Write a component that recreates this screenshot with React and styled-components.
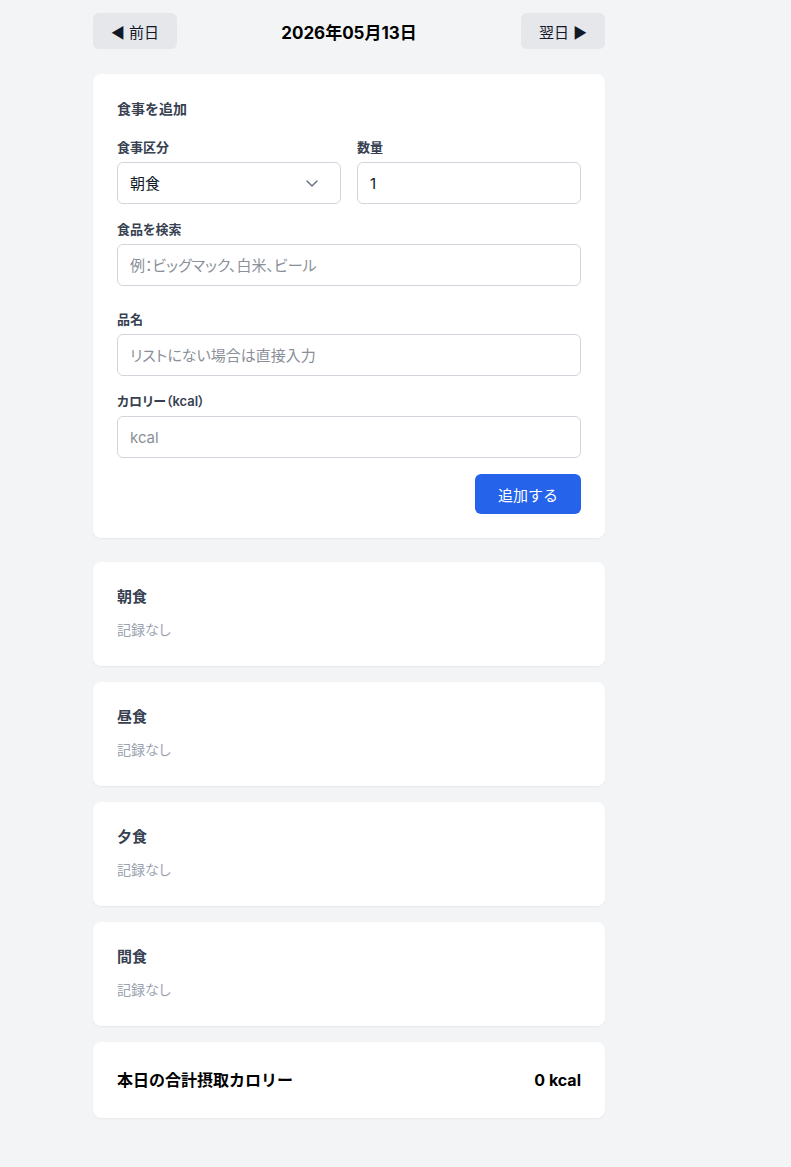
import styled, { createGlobalStyle } from "styled-components";

const GlobalStyle = createGlobalStyle`
  html, body {
    margin: 0;
    padding: 0;
    background: #f3f4f6;
  }
  body {
    font-family: "Inter", "Noto Sans CJK JP", sans-serif;
    color: #111827;
  }
`;

const meals = ["朝食", "昼食", "夕食", "間食"];

const App = () => {
    return (
        <Page>
            <GlobalStyle />
            <Container>
                <DateNav>
                    <NavButton>◀ 前日</NavButton>
                    <DateTitle>2026年05月13日</DateTitle>
                    <NavButton>翌日 ▶</NavButton>
                </DateNav>

                <Card>
                    <FormTitle>食事を追加</FormTitle>
                    <Row>
                        <Field>
                            <Label>食事区分</Label>
                            <SelectWrap>
                                <Select defaultValue="朝食">
                                    {meals.map((m) => <option key={m}>{m}</option>)}
                                </Select>
                                <Chevron viewBox="0 0 16 16">
                                    <path d="M3 6l5 5 5-5" fill="none" stroke="#6b7280" strokeWidth="1.5" strokeLinecap="round" strokeLinejoin="round" />
                                </Chevron>
                            </SelectWrap>
                        </Field>
                        <Field>
                            <Label>数量</Label>
                            <Input type="number" defaultValue="1" />
                        </Field>
                    </Row>
                    <Field $extra>
                        <Label>食品を検索</Label>
                        <Input placeholder="例：ビッグマック、白米、ビール" />
                    </Field>
                    <Field>
                        <Label>品名</Label>
                        <Input placeholder="リストにない場合は直接入力" />
                    </Field>
                    <Field>
                        <Label>カロリー（kcal）</Label>
                        <Input placeholder="kcal" />
                    </Field>
                    <Actions>
                        <AddButton>追加する</AddButton>
                    </Actions>
                </Card>

                {meals.map((m) => (
                    <MealCard key={m}>
                        <MealTitle>{m}</MealTitle>
                        <Empty>記録なし</Empty>
                    </MealCard>
                ))}

                <TotalCard>
                    <span>本日の合計摂取カロリー</span>
                    <span>0 kcal</span>
                </TotalCard>
            </Container>
        </Page>
    );
}

const Page = styled.div`
    min-height: 1167px;
    padding: 13px 0 40px 93px;
    box-sizing: border-box;
`;

const Container = styled.div`
    width: 512px;
    display: flex;
    flex-direction: column;
    gap: 16px;
`;

const DateNav = styled.div`
    display: flex;
    justify-content: space-between;
    align-items: center;
    margin-bottom: 9px;
`;

const NavButton = styled.button`
    height: 36px;
    padding: 0 18px;
    border: none;
    border-radius: 6px;
    background: #e5e7eb;
    color: #111827;
    font-family: inherit;
    font-size: 15px;
`;

const DateTitle = styled.div`
    font-size: 17px;
    font-weight: 700;
    color: #000;
`;

const Card = styled.div`
    background: #fff;
    border-radius: 8px;
    padding: 24px;
    box-shadow: 0 1px 2px rgba(0, 0, 0, 0.05);
    display: flex;
    flex-direction: column;
    gap: 16px;
    margin-bottom: 8px;
`;

const FormTitle = styled.div`
    font-size: 14px;
    font-weight: 600;
    line-height: 22px;
    color: #374151;
    margin-bottom: 2px;
`;

const Row = styled.div`
    display: grid;
    grid-template-columns: 1fr 1fr;
    gap: 16px;
`;

const Field = styled.div`
    display: flex;
    flex-direction: column;
    gap: 6px;
    margin-bottom: ${(p) => (p.$extra ? "8px" : "0")};
`;

const Label = styled.label`
    font-size: 13px;
    font-weight: 600;
    line-height: 18px;
    color: #374151;
    font-feature-settings: "palt";
`;

const Input = styled.input`
    box-sizing: border-box;
    width: 100%;
    height: 42px;
    padding: 0 12px;
    border: 1px solid #d1d5db;
    border-radius: 6px;
    font-family: inherit;
    font-size: 15px;
    font-feature-settings: "palt";
    color: #111827;
    background: #fff;
    outline: none;
    -moz-appearance: textfield;
    &::-webkit-inner-spin-button,
    &::-webkit-outer-spin-button {
        -webkit-appearance: none;
        margin: 0;
    }
    &::placeholder {
        color: #8a8f98;
    }
`;

const SelectWrap = styled.div`
    position: relative;
`;

const Select = styled.select`
    box-sizing: border-box;
    width: 100%;
    height: 42px;
    padding: 0 12px;
    border: 1px solid #d1d5db;
    border-radius: 6px;
    font-family: inherit;
    font-size: 15px;
    color: #111827;
    background: #fff;
    appearance: none;
    outline: none;
`;

const Chevron = styled.svg`
    position: absolute;
    right: 21px;
    top: 13px;
    width: 16px;
    height: 16px;
    pointer-events: none;
`;

const Actions = styled.div`
    display: flex;
    justify-content: flex-end;
`;

const AddButton = styled.button`
    height: 40px;
    width: 106px;
    border: none;
    border-radius: 6px;
    background: #2563eb;
    color: #fff;
    font-family: inherit;
    font-size: 15px;
`;

const MealCard = styled.div`
    background: #fff;
    border-radius: 8px;
    padding: 24px 24px 25px;
    box-shadow: 0 1px 2px rgba(0, 0, 0, 0.05);
`;

const MealTitle = styled.div`
    font-size: 15px;
    font-weight: 700;
    line-height: 22px;
    color: #374151;
    margin-bottom: 11px;
`;

const Empty = styled.div`
    font-size: 14px;
    line-height: 22px;
    color: #9ca3af;
    font-feature-settings: "palt";
`;

const TotalCard = styled.div`
    background: #fff;
    border-radius: 8px;
    padding: 24px;
    box-shadow: 0 1px 2px rgba(0, 0, 0, 0.05);
    display: flex;
    justify-content: space-between;
    align-items: center;
    font-size: 16px;
    font-weight: 700;
    line-height: 28px;
    color: #000;
`;

export default App;
